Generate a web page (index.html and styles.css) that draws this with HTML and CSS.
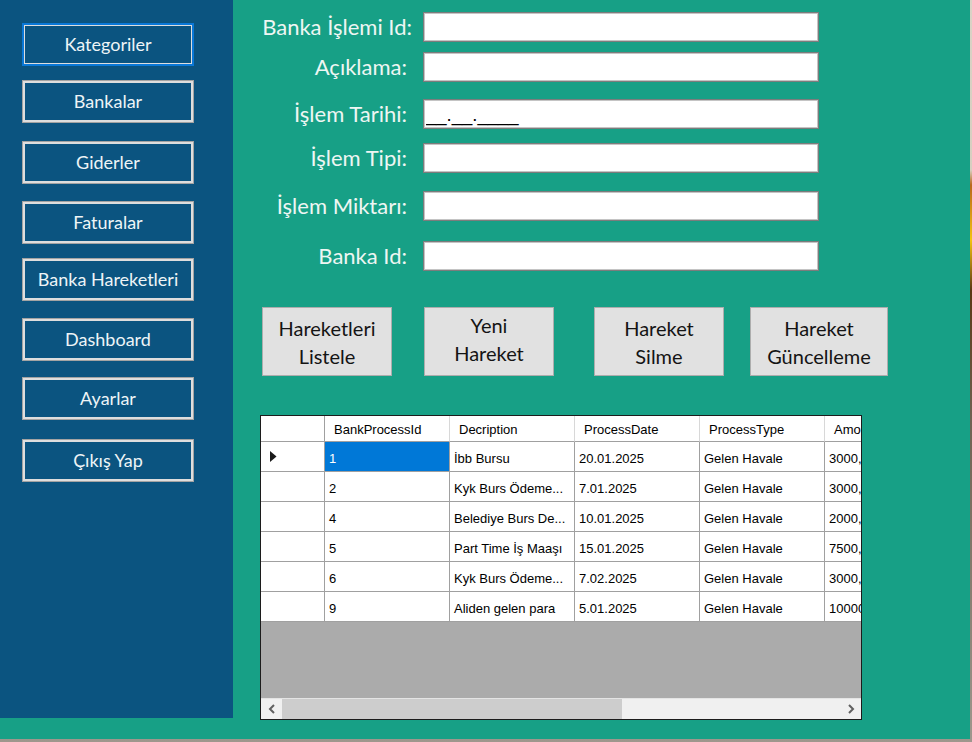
FILE: index.html
```html
<!DOCTYPE html>
<html lang="tr">
<head>
<meta charset="utf-8">
<title>Banka Hareketleri</title>
<link rel="stylesheet" href="styles.css">
</head>
<body>
<div class="window">
  <nav class="sidebar">
    <div class="nav">
      <button class="nav-btn nav-btn--active">Kategoriler</button>
      <button class="nav-btn">Bankalar</button>
      <button class="nav-btn">Giderler</button>
      <button class="nav-btn">Faturalar</button>
      <button class="nav-btn">Banka Hareketleri</button>
      <button class="nav-btn">Dashboard</button>
      <button class="nav-btn">Ayarlar</button>
      <button class="nav-btn">Çıkış Yap</button>
    </div>
  </nav>
  <main class="content">
    <div class="form">
      <label class="form-label form-label--id">Banka İşlemi Id:</label>
      <input class="form-input" type="text">
      <label class="form-label">Açıklama:</label>
      <input class="form-input" type="text">
      <label class="form-label">İşlem Tarihi:</label>
      <input class="form-input form-input--mask" type="text" value="__.__.____">
      <label class="form-label">İşlem Tipi:</label>
      <input class="form-input" type="text">
      <label class="form-label">İşlem Miktarı:</label>
      <input class="form-input" type="text">
      <label class="form-label">Banka Id:</label>
      <input class="form-input" type="text">
    </div>
    <div class="actions">
      <button class="action">Hareketleri<br>Listele</button>
      <button class="action action--new">Yeni<br>Hareket</button>
      <button class="action action--delete">Hareket<br>Silme</button>
      <button class="action action--update">Hareket<br>Güncelleme</button>
    </div>
    <div class="dgv">
      <div class="dgv-viewport">
        <div class="dgv-row dgv-head">
          <div class="cell"></div>
          <div class="cell">BankProcessId</div>
          <div class="cell">Decription</div>
          <div class="cell">ProcessDate</div>
          <div class="cell">ProcessType</div>
          <div class="cell">Amount</div>
        </div>
        <div class="dgv-row">
          <div class="cell cell--rowhead"><svg class="row-marker" width="7" height="11" viewBox="0 0 7 11"><path d="M0 0 L6.5 5.5 L0 11 Z" fill="#1a1a1a"/></svg></div>
          <div class="cell cell--selected">1</div>
          <div class="cell">İbb Bursu</div>
          <div class="cell">20.01.2025</div>
          <div class="cell">Gelen Havale</div>
          <div class="cell">3000,00</div>
        </div>
        <div class="dgv-row">
          <div class="cell cell--rowhead"></div>
          <div class="cell">2</div>
          <div class="cell">Kyk Burs Ödeme...</div>
          <div class="cell">7.01.2025</div>
          <div class="cell">Gelen Havale</div>
          <div class="cell">3000,00</div>
        </div>
        <div class="dgv-row">
          <div class="cell cell--rowhead"></div>
          <div class="cell">4</div>
          <div class="cell">Belediye Burs De...</div>
          <div class="cell">10.01.2025</div>
          <div class="cell">Gelen Havale</div>
          <div class="cell">2000,00</div>
        </div>
        <div class="dgv-row">
          <div class="cell cell--rowhead"></div>
          <div class="cell">5</div>
          <div class="cell">Part Time İş Maaşı</div>
          <div class="cell">15.01.2025</div>
          <div class="cell">Gelen Havale</div>
          <div class="cell">7500,00</div>
        </div>
        <div class="dgv-row">
          <div class="cell cell--rowhead"></div>
          <div class="cell">6</div>
          <div class="cell">Kyk Burs Ödeme...</div>
          <div class="cell">7.02.2025</div>
          <div class="cell">Gelen Havale</div>
          <div class="cell">3000,00</div>
        </div>
        <div class="dgv-row">
          <div class="cell cell--rowhead"></div>
          <div class="cell">9</div>
          <div class="cell">Aliden gelen para</div>
          <div class="cell">5.01.2025</div>
          <div class="cell">Gelen Havale</div>
          <div class="cell">10000,00</div>
        </div>
      </div>
      <div class="hscroll">
        <div class="hscroll-arrow"><svg width="8" height="10" viewBox="0 0 8 10"><path d="M6 1 L2 5 L6 9" fill="none" stroke="#606060" stroke-width="2"/></svg></div>
        <div class="hscroll-thumb"></div>
        <div class="hscroll-track"></div>
        <div class="hscroll-arrow"><svg width="8" height="10" viewBox="0 0 8 10"><path d="M2 1 L6 5 L2 9" fill="none" stroke="#606060" stroke-width="2"/></svg></div>
      </div>
    </div>
  </main>
</div>
</body>
</html>
```

FILE: styles.css
```css
html, body {
  margin: 0;
  padding: 0;
}

body {
  width: 972px;
  height: 742px;
  overflow: hidden;
  font-family: Lato, "Noto Sans", sans-serif;
  background: linear-gradient(to bottom, #d9d3c6 0, #d6cfc0 170px, #b8681c 185px, #f2c310 240px, #5a3814 290px, #6f6252 420px, #9e978d 742px);
}

.window {
  width: 970px;
  height: 739px;
  background: #17a086;
  display: flex;
  align-items: flex-start;
}

/* Sidebar */
.sidebar {
  width: 233px;
  height: 718px;
  box-sizing: border-box;
  padding: 23px 0 0 22px;
  background: #0b5480;
  flex: none;
}

.nav {
  display: grid;
  grid-template-rows: 57px 61px 60px 57px 60px 59px 62px 43px;
  width: 172px;
}

.nav-btn {
  width: 172px;
  height: 43px;
  box-sizing: border-box;
  padding: 0 0 2px;
  border: 1px solid #a3a3a3;
  box-shadow: inset 0 0 0 2px #dedede;
  background: transparent;
  color: #eef4f7;
  font-family: Lato, "Noto Sans", sans-serif;
  font-size: 18px;
  text-align: center;
  white-space: nowrap;
}

.nav-btn--active {
  border: 2px solid #0a78d7;
  box-shadow: inset 0 0 0 1px #dedede;
}

/* Content */
.content {
  padding: 12px 0 0 12px;
}

.form {
  display: grid;
  grid-template-columns: 162px 396px;
  grid-template-rows: 40px 47px 44px 48px 50px 30px;
  column-gap: 16px;
}

.form-label {
  align-self: start;
  text-align: right;
  line-height: 30px;
  color: #eef6f3;
  font-size: 22px;
  white-space: nowrap;
}

.form-label--id {
  margin-right: -5px;
}

.form-input {
  align-self: start;
  width: 396px;
  height: 30px;
  box-sizing: border-box;
  margin: 0;
  border: 1px solid #7c7c7c;
  box-shadow: inset 0 0 0 1px #c4c4c4;
  background: #fff;
  padding: 0 2px;
  font-family: Lato, "Noto Sans", sans-serif;
  font-size: 21px;
  color: #000;
  outline: none;
}

.form-input--mask {
  font-family: "Liberation Sans", Arial, sans-serif;
  font-size: 18.5px;
  padding-top: 2px;
}

.actions {
  display: flex;
  align-items: flex-start;
  margin: 36px 0 0 17px;
}

.action {
  width: 130px;
  height: 69px;
  box-sizing: border-box;
  padding: 0;
  border: 1px solid #adadad;
  background: #e1e1e1;
  color: #141414;
  font-family: Lato, "Noto Sans", sans-serif;
  font-size: 20px;
  line-height: 28px;
  text-align: center;
}

.action--new {
  margin-left: 32px;
  padding-bottom: 5px;
}

.action--delete {
  margin-left: 40px;
}

.action--update {
  margin-left: 26px;
  width: 138px;
}

/* Data grid */
.dgv {
  margin: 39px 0 0 15px;
  width: 602px;
  height: 305px;
  box-sizing: border-box;
  border: 1px solid #1c1c1c;
  background: #ababab;
  display: flex;
  flex-direction: column;
  font-family: "Liberation Sans", Arial, sans-serif;
}

.dgv-viewport {
  flex: 1;
  overflow: hidden;
}

.dgv-row {
  display: grid;
  grid-template-columns: 64px repeat(5, 125px);
}

.cell {
  height: 30px;
  box-sizing: border-box;
  border-right: 1px solid #a0a0a0;
  border-bottom: 1px solid #a0a0a0;
  background: #fff;
  padding: 3px 0 0 4px;
  line-height: 27px;
  font-size: 13px;
  color: #000;
  white-space: nowrap;
  overflow: hidden;
}

.dgv-head .cell {
  height: 26px;
  padding: 2px 0 0 9px;
  line-height: 24px;
  font-size: 13px;
  border-right-color: #d8d8d8;
}

.dgv-head .cell:first-child {
  border-right-color: #a0a0a0;
}

.cell--rowhead {
  display: flex;
  align-items: center;
  padding: 0 0 0 9px;
}

.cell--selected {
  background: #0078d7;
  color: #fff;
}

.hscroll {
  height: 21px;
  display: flex;
  background: #f0f0f0;
  border-top: 1px solid #e4e4e4;
  box-sizing: border-box;
}

.hscroll-arrow {
  width: 21px;
  display: flex;
  align-items: center;
  justify-content: center;
}

.hscroll-thumb {
  width: 340px;
  background: #cdcdcd;
}

.hscroll-track {
  flex: 1;
}
```
